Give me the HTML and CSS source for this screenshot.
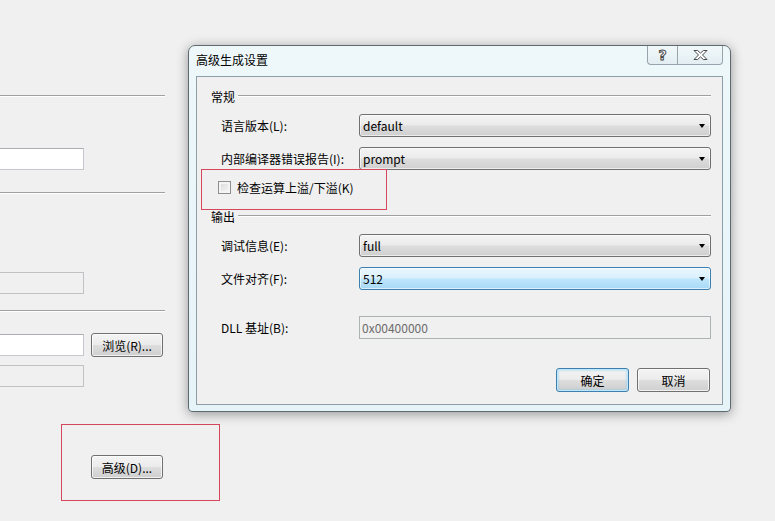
FILE: index.html
```html
<!DOCTYPE html>
<html lang="zh-CN">
<head>
<meta charset="utf-8">
<title>高级生成设置</title>
<link rel="stylesheet" href="styles.css">
</head>
<body>
<div class="page">
  <div class="etch first"></div>
  <div class="tb white w84 m51"></div>
  <div class="etch m22"></div>
  <div class="tb dis w83 m78"></div>
  <div class="etch m16"></div>
  <div class="browse-row">
    <div class="tb white w84"></div>
    <div class="btn w72">浏览(R)...</div>
  </div>
  <div class="tb dis w83 m8"></div>
  <div class="btn w72 adv">高级(D)...</div>
</div>

<div class="mark mark-adv"></div>

<div class="dialog">
  <div class="titlebar">
    <span class="title">高级生成设置</span>
    <div class="caption">
      <div class="cbtn help"><span class="qm">?</span></div>
      <div class="cbtn close">
        <svg width="15" height="12" viewBox="0 0 15 12"><path d="M1 1.5h3.6l2.9 2.6 2.9-2.6H14L9.5 6l4.5 4.5h-3.6L7.5 7.9 4.6 10.5H1L5.5 6z" fill="#fff" stroke="#4a4a4a" stroke-width="1" stroke-linejoin="round"/></svg>
      </div>
    </div>
  </div>
  <div class="client">
    <div class="ghead"><span>常规</span><div class="gline"></div></div>
    <div class="row m11">
      <span class="lbl">语言版本(L):</span>
      <div class="combo"><span>default</span><i class="arrow"></i></div>
    </div>
    <div class="row m10">
      <span class="lbl">内部编译器错误报告(I):</span>
      <div class="combo"><span>prompt</span><i class="arrow"></i></div>
    </div>
    <div class="chkrow">
      <span class="chk"></span><span>检查运算上溢/下溢(K)</span>
    </div>
    <div class="ghead g2"><span>输出</span><div class="gline"></div></div>
    <div class="row m11">
      <span class="lbl">调试信息(E):</span>
      <div class="combo"><span>full</span><i class="arrow"></i></div>
    </div>
    <div class="row m10">
      <span class="lbl">文件对齐(F):</span>
      <div class="combo hot"><span>512</span><i class="arrow"></i></div>
    </div>
    <div class="row m26">
      <span class="lbl">DLL 基址(B):</span>
      <div class="dtb">0x00400000</div>
    </div>
    <div class="btnrow">
      <div class="btn def w73">确定</div>
      <div class="btn w73">取消</div>
    </div>
  </div>
</div>

<div class="mark mark-chk"></div>
</body>
</html>
```

FILE: styles.css
```css
html, body {
  margin: 0;
  padding: 0;
}
body {
  width: 775px;
  height: 521px;
  overflow: hidden;
  background: #f0f0f0;
  font-family: "Noto Sans CJK SC", "Noto Sans", sans-serif;
  font-size: 12px;
  color: #000;
  position: relative;
}

/* background form */
.page {
  display: flex;
  flex-direction: column;
  align-items: flex-start;
  width: 165px;
}
.etch {
  height: 1px;
  border-top: 1px solid #a0a0a0;
  background: #fff;
  width: 165px;
}
.first { margin-top: 95px; }
.m51 { margin-top: 51px; }
.m22 { margin-top: 22px; }
.m78 { margin-top: 78px; }
.m16 { margin-top: 16px; }
.m8 { margin-top: 8px; }
.tb {
  box-sizing: border-box;
  height: 22px;
  margin-left: -2px;
}
.tb.white {
  background: #fff;
  border: 1px solid #c5c8cc;
  border-top-color: #abadb3;
}
.tb.dis {
  background: #f0f0f0;
  border: 1px solid #c0c2c6;
}
.w84 { width: 86px; }
.w83 { width: 86px; }
.browse-row {
  display: flex;
  align-items: center;
  height: 24px;
  margin-top: 21px;
  gap: 7px;
}
.btn {
  box-sizing: border-box;
  height: 24px;
  border: 1px solid #707070;
  border-radius: 3px;
  background: linear-gradient(#f4f4f4 0%, #ebebeb 48%, #dddddd 52%, #cfcfcf 100%);
  box-shadow: inset 0 0 0 1px rgba(255,255,255,0.7);
  display: flex;
  align-items: center;
  justify-content: center;
  color: #000;
  flex: none;
}
.w72 { width: 72px; }
.w73 { width: 73px; }
.adv {
  margin-top: 68px;
  margin-left: 91px;
}

/* annotations */
.mark {
  position: absolute;
  box-sizing: border-box;
  border: 1px solid #d4475c;
}
.mark-adv {
  left: 61px;
  top: 424px;
  width: 159px;
  height: 77px;
}
.mark-chk {
  left: 201px;
  top: 169px;
  width: 186px;
  height: 41px;
}

/* dialog */
.dialog {
  position: absolute;
  left: 188px;
  top: 45px;
  width: 543px;
  height: 367px;
  box-sizing: border-box;
  border: 1px solid #5d6a72;
  border-radius: 7px 7px 4px 4px;
  background: linear-gradient(#eef8fb, #e6f3f7);
  box-shadow: 0 2px 12px rgba(0,0,0,0.38);
  display: flex;
  flex-direction: column;
}
.titlebar {
  height: 30px;
  position: relative;
  display: flex;
  align-items: center;
  padding-left: 7px;
}
.title {
  margin-top: -3px;
  color: #000;
}
.caption {
  position: absolute;
  top: 0;
  right: 7px;
  display: flex;
}
.cbtn {
  box-sizing: border-box;
  height: 19px;
  border: 1px solid #98a4ac;
  border-top: none;
  background: linear-gradient(#f1f8fa, #e3eef2);
  display: flex;
  align-items: center;
  justify-content: center;
}
.help {
  width: 30px;
  border-radius: 0 0 0 4px;
  border-right: none;
}
.close {
  width: 46px;
  border-radius: 0 0 4px 0;
}
.qm {
  font-family: "DejaVu Sans", sans-serif;
  font-size: 14px;
  font-weight: bold;
  color: #fff;
  -webkit-text-stroke: 1px #4a4a4a;
  line-height: 1;
  margin-top: -1px;
}
.client {
  flex: 1;
  margin: 0 7px 6px 7px;
  border: 1px solid #8e9ea8;
  background: #f0f0f0;
  padding: 12px 11px 0 14px;
  display: flex;
  flex-direction: column;
}
.ghead {
  height: 14px;
  display: flex;
  align-items: center;
}
.ghead span { white-space: nowrap; }
.gline {
  flex: 1;
  margin-left: 3px;
  height: 1px;
  border-top: 1px solid #a0a0a0;
  background: #fff;
}
.g2 { margin-top: 15px; }
.row {
  height: 23px;
  display: flex;
  align-items: center;
  padding-left: 10px;
}
.m11 { margin-top: 11px; }
.m10 { margin-top: 10px; }
.m26 { margin-top: 26px; }
.lbl {
  width: 138px;
  flex: none;
  white-space: nowrap;
}
.combo {
  flex: 1;
  height: 23px;
  box-sizing: border-box;
  border: 1px solid #707070;
  border-radius: 3px;
  background: linear-gradient(#f4f4f4 0%, #ebebeb 48%, #dddddd 52%, #cfcfcf 100%);
  box-shadow: inset 0 0 0 1px rgba(255,255,255,0.6);
  display: flex;
  align-items: center;
  justify-content: space-between;
  padding: 0 5px 0 3px;
}
.combo.hot {
  border-color: #3c7fb1;
  background: linear-gradient(#eaf6fd 0%, #d9f0fc 48%, #bee6fd 52%, #a7d9f5 100%);
}
.arrow {
  width: 0;
  height: 0;
  border-left: 3.5px solid transparent;
  border-right: 3.5px solid transparent;
  border-top: 4px solid #000;
  margin-top: 1px;
}
.chkrow {
  margin-top: 11px;
  height: 13px;
  display: flex;
  align-items: center;
  padding-left: 7px;
  gap: 6px;
}
.chk {
  width: 13px;
  height: 13px;
  box-sizing: border-box;
  border: 1px solid #8e8f8f;
  background: linear-gradient(135deg, #d8d8d8, #f8f8f8);
  box-shadow: inset 0 0 0 2px #f4f4f4;
  flex: none;
}
.dtb {
  flex: 1;
  height: 23px;
  box-sizing: border-box;
  border: 1px solid #adb2b5;
  background: #f0f0f0;
  color: #6d6d6d;
  display: flex;
  align-items: center;
  padding-left: 2px;
}
.btnrow {
  margin-top: 29px;
  display: flex;
  justify-content: flex-end;
  gap: 8px;
  padding-right: 1px;
}
.btn.def {
  border-color: #3c7fb1;
  box-shadow: inset 0 0 0 1px #bfe6fb, inset 0 0 2px 2px rgba(120,200,240,0.35);
}
```
